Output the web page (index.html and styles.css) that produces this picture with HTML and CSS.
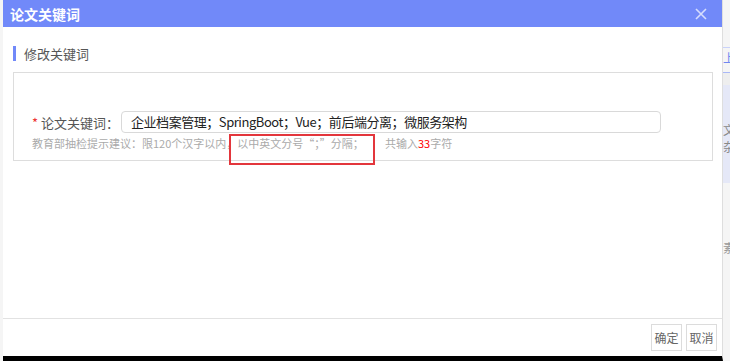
FILE: index.html
```html
<!DOCTYPE html>
<html lang="zh-CN">
<head>
  <meta charset="UTF-8">
  <meta name="viewport" content="width=device-width, initial-scale=1.0">
  <title>论文关键词</title>
  <link rel="stylesheet" href="styles.css">
</head>
<body>
  <div class="page">
    <div class="page-main"></div>
    <div class="page-side">
      <div class="side-tab">上传</div>
      <div class="side-gap"></div>
      <div class="side-panel">
        <p>文</p>
        <p>杂</p>
      </div>
      <div class="side-note">素</div>
    </div>
  </div>

  <div class="dialog">
    <div class="dialog-title">
      <span>论文关键词</span>
      <svg class="close-icon" width="12" height="12" viewBox="0 0 12 12">
        <path d="M1 1 L11 11 M11 1 L1 11" stroke="#d6ddfd" stroke-width="1.6" fill="none"/>
      </svg>
    </div>

    <div class="dialog-body">
      <div class="section-title">修改关键词</div>
      <div class="form-box">
        <div class="form-row">
          <label class="form-label"><span class="required">*</span>论文关键词：</label>
          <div class="form-input">企业档案管理；SpringBoot；Vue；前后端分离；微服务架构</div>
        </div>
        <div class="form-hint">
          <span class="hint-rule">教育部抽检提示建议：限120个汉字以内，以中英文分号“；”分隔；</span><span>共输入<em class="count">33</em>字符</span>
        </div>
        <div class="mark"></div>
      </div>
    </div>

    <div class="dialog-footer">
      <button class="btn">确定</button>
      <button class="btn">取消</button>
    </div>
  </div>
</body>
</html>
```

FILE: styles.css
```css
body {
  margin: 0;
  background-color: #f5f5f5;
  font-family: "Noto Sans CJK SC", "Noto Sans", sans-serif;
  color: #333;
  overflow: hidden;
}
.page {
  display: flex;
  height: 361px;
}
.page-main {
  flex: 1;
}
.page-side {
  width: 7px;
  overflow: hidden;
  padding-top: 47px;
  font-size: 12px;
}
.side-tab {
  height: 24px;
  line-height: 20px;
  color: #6f87f0;
  border-top: 1px solid #c9d2fa;
  border-bottom: 1px solid #aab8f6;
  white-space: nowrap;
}
.side-gap {
  height: 12px;
  background-color: #eeeeee;
}
.side-panel {
  height: 98px;
  background-color: #e5e8f7;
  color: #888;
  padding-top: 36px;
  box-sizing: border-box;
}
.side-panel p {
  margin: 0;
  line-height: 17px;
}
.side-note {
  margin-top: 56px;
  color: #999;
}

.dialog {
  position: fixed;
  left: 3px;
  top: 0;
  width: 720px;
  height: 361px;
  box-sizing: border-box;
  background-color: #fff;
  border-right: 1px solid #dedede;
  border-bottom: 5px solid #000;
  display: flex;
  flex-direction: column;
}
.dialog-title {
  height: 27px;
  flex-shrink: 0;
  background-color: #7189f9;
  color: #fff;
  font-size: 14px;
  font-weight: bold;
  padding: 0 15px 0 7px;
  display: flex;
  align-items: center;
  justify-content: space-between;
}
.dialog-body {
  flex: 1;
  padding: 19px 9px 0 10px;
}
.section-title {
  border-left: 3px solid #7189f9;
  padding-left: 8px;
  height: 15px;
  line-height: 15px;
  font-size: 13px;
  color: #555;
}
.form-box {
  position: relative;
  margin-top: 11px;
  height: 89px;
  box-sizing: border-box;
  border: 1px solid #dddddd;
  padding: 38px 0 0 18px;
}
.form-row {
  display: flex;
  align-items: center;
}
.form-label {
  width: 89px;
  font-size: 13px;
  color: #555;
  white-space: nowrap;
}
.required {
  color: #e33;
  margin-right: 3px;
}
.form-input {
  width: 540px;
  height: 22px;
  line-height: 20px;
  box-sizing: border-box;
  border: 1px solid #d9d9d9;
  border-radius: 4px;
  padding-left: 9px;
  font-size: 13px;
  letter-spacing: -0.45px;
  color: #222;
  white-space: nowrap;
}
.form-hint {
  margin-top: 3px;
  font-size: 11px;
  line-height: 14px;
  color: #aaa;
  white-space: nowrap;
}
.hint-rule {
  display: inline-block;
  width: 353px;
}
.count {
  font-style: normal;
  color: #f00;
}
.mark {
  position: absolute;
  left: 215px;
  top: 61px;
  width: 146px;
  height: 31px;
  box-sizing: border-box;
  border: 2px solid #e3363c;
}
.dialog-footer {
  height: 38px;
  flex-shrink: 0;
  border-top: 1px solid #e2e2e2;
  box-sizing: border-box;
  padding: 5px 5px 0 0;
  display: flex;
  justify-content: flex-end;
  gap: 4px;
}
.btn {
  width: 31px;
  height: 27px;
  padding: 0;
  border: 1px solid #dcdcdc;
  background-color: #fff;
  color: #666;
  font-family: inherit;
  font-size: 12px;
}
```
